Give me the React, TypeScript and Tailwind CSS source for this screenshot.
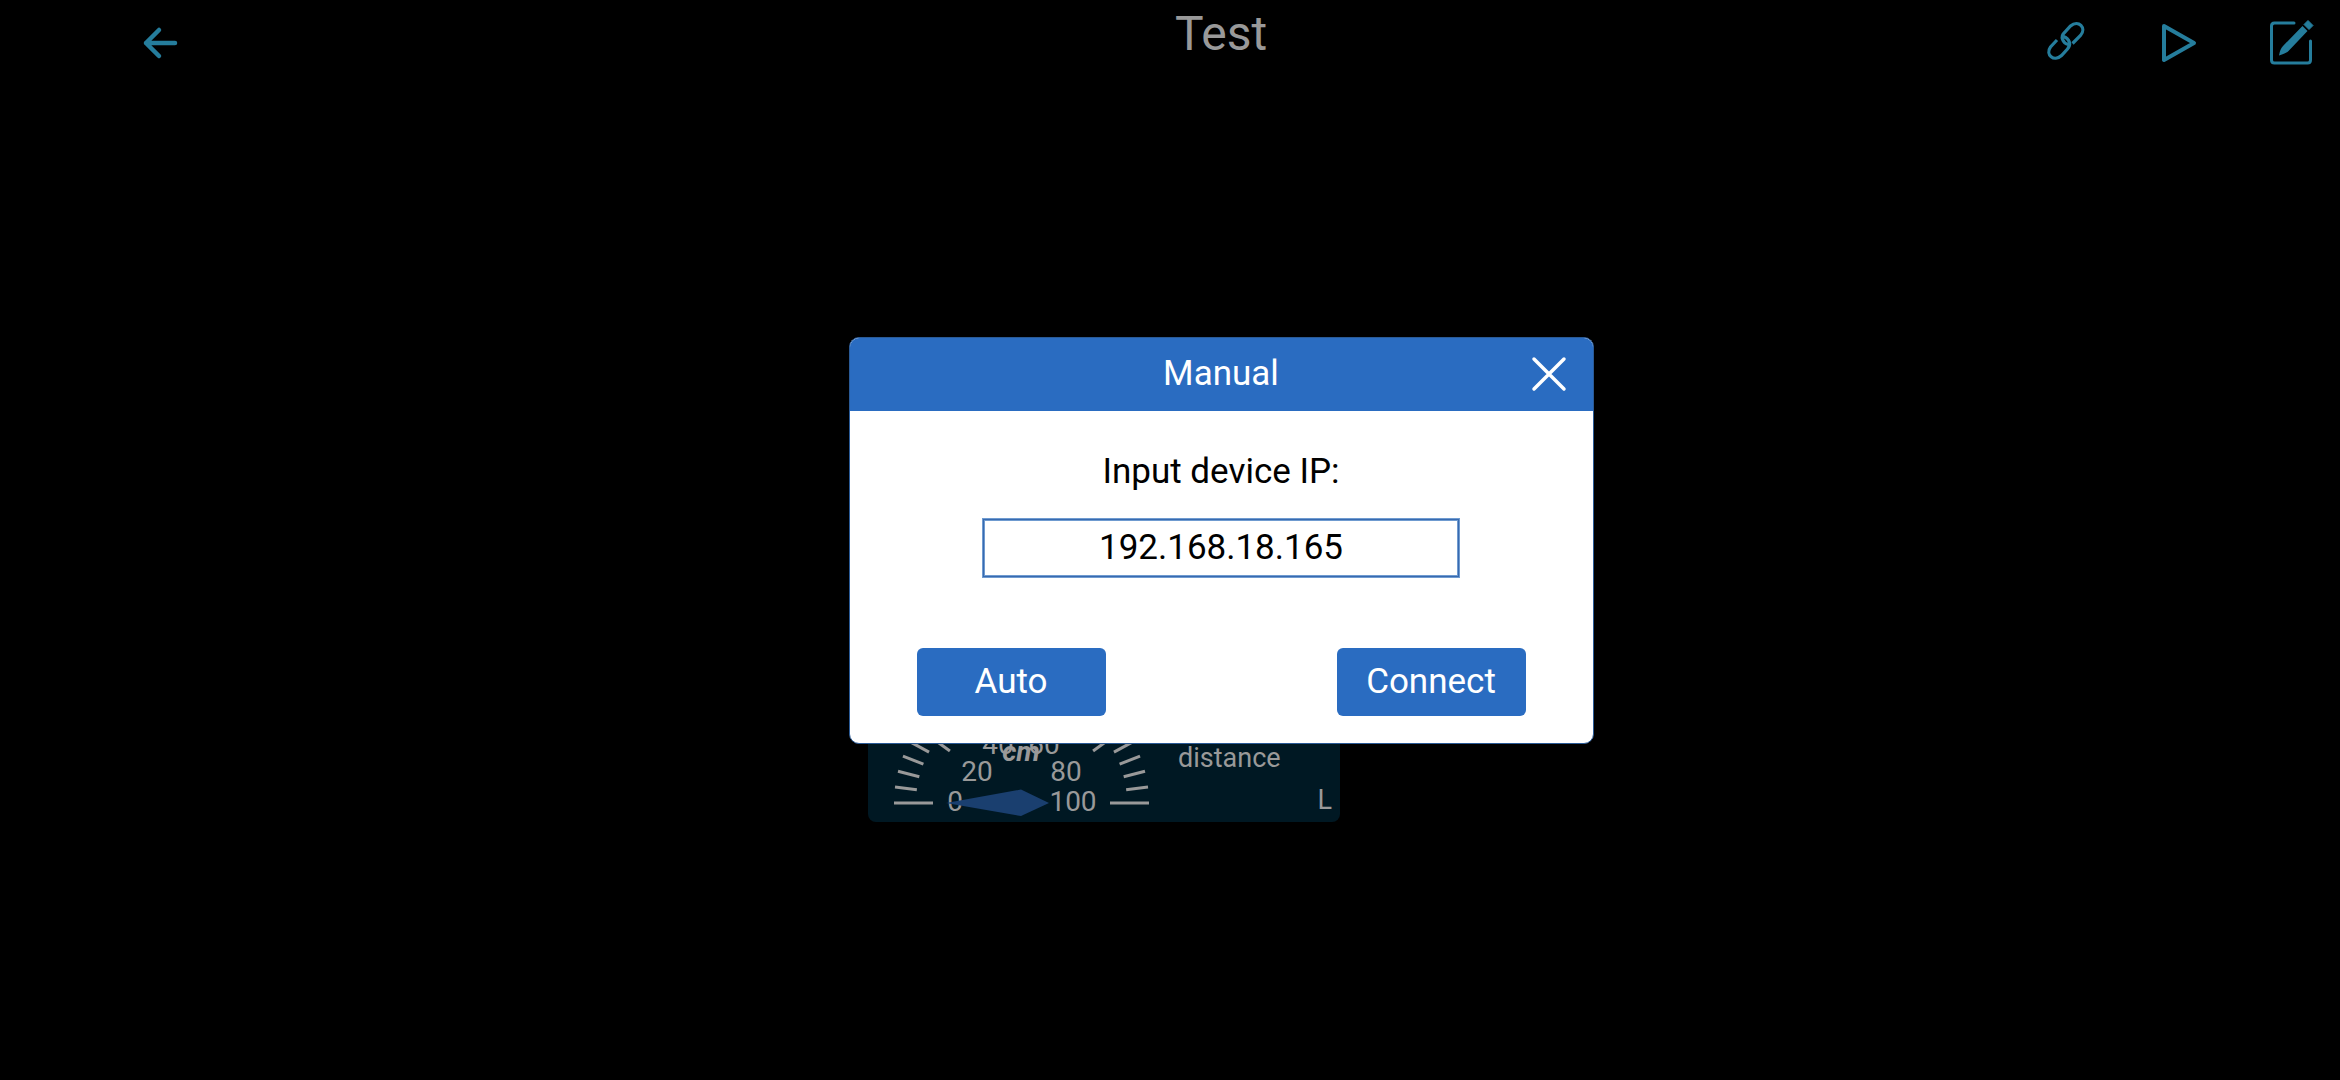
import { useState } from "react";

const TICKS = Array.from({ length: 26 }, (_, i) => i);
const LABELS = [
  { text: "0", x: 87, y: 244 },
  { text: "20", x: 109, y: 214 },
  { text: "40", x: 130, y: 187 },
  { text: "60", x: 176, y: 187 },
  { text: "80", x: 198, y: 214 },
  { text: "100", x: 205, y: 244 },
];

function Gauge() {
  return (
    <svg className="h-[262px] w-[308px] shrink-0" viewBox="0 0 308 262" role="img" aria-label="Distance gauge in centimetres">
      <g stroke="#999999" strokeWidth="3">
        {TICKS.map((i) => {
          const angle = Math.PI - (i * Math.PI) / 25;
          const inner = i % 5 === 0 ? 88.5 : 105.5;
          return (
            <line
              key={i}
              x1={153.5 + 127.5 * Math.cos(angle)}
              y1={243 - 127.5 * Math.sin(angle)}
              x2={153.5 + inner * Math.cos(angle)}
              y2={243 - inner * Math.sin(angle)}
            />
          );
        })}
      </g>
      <g fill="#999999" fontSize="28" textAnchor="middle">
        {LABELS.map((l) => (
          <text key={l.text} x={l.x} y={l.y + 7}>
            {l.text}
          </text>
        ))}
        <text x="153" y="201" fontWeight="700" fontStyle="italic">
          cm
        </text>
      </g>
      <path d="M78 243 L153 229.5 L181 243 L153 256 Z" fill="#1a3f6f" />
    </svg>
  );
}

function GaugeWidget() {
  return (
    <section className="flex w-[472px] overflow-hidden rounded-lg bg-[#001823] text-[27px] leading-8 text-[#999999]">
      <Gauge />
      <div className="flex flex-1 flex-col justify-end pr-2 pb-1.5">
        <p className="pl-0.5">distance</p>
        <p className="pt-2.5 text-right">L</p>
      </div>
    </section>
  );
}

function TopBar() {
  return (
    <header className="grid grid-cols-3 items-start text-[#257d9c]">
      <div className="pt-6 pl-10">
        <button aria-label="Back" className="block">
          <svg className="h-[38px] w-[36px]" viewBox="0 0 36 38" fill="none" stroke="currentColor" strokeWidth="4.5" strokeLinecap="round" strokeLinejoin="round">
            <path d="M33 19H4M17 6L4 19l13 13" />
          </svg>
        </button>
      </div>
      <h1 className="pt-1 text-center text-[48px] leading-[60px] text-[#999999]">Test</h1>
      <div className="flex justify-end gap-[65px] pt-[18px] pr-[25px]">
        <button aria-label="Link">
          <svg className="size-12" viewBox="0 0 48 48" fill="none" stroke="currentColor" strokeWidth="3.2">
            <path d="M28.5 27.5C22.500 26 20 19.500 24.5 15.5L30.5 9C38.500 2 47 11 40.500 18.500L32.500 26.500" transform="translate(-1 -1)" />
            <path d="M22.500 18.500C28.500 20.500 30.500 26.500 26.500 31L20.500 37.500C13 44.500 4 36.500 9.500 29L16 22" />
          </svg>
        </button>
        <button aria-label="Run">
          <svg className="size-12" viewBox="0 0 48 48" fill="none" stroke="currentColor" strokeWidth="4" strokeLinejoin="round">
            <path d="M10 8L40 25L10 42Z" />
          </svg>
        </button>
        <button aria-label="Edit">
          <svg className="size-12" viewBox="0 0 48 48">
            <path d="M27 5H7.500Q4.500 5 4.500 8V42Q4.500 45 7.500 45H40.500Q43.500 45 43.500 42V23" fill="none" stroke="currentColor" strokeWidth="3" strokeLinecap="round" />
            <path d="M35.500 8L40.500 13L21.500 33Q19 35.500 12 37.500Q13 31 16 28Z" fill="currentColor" />
            <path d="M37 6.500L41 2.500L46 7.500L42 11.500Z" fill="currentColor" stroke="currentColor" strokeWidth="1" strokeLinejoin="round" />
          </svg>
        </button>
      </div>
    </header>
  );
}

function ManualDialog() {
  const [ip, setIp] = useState("192.168.18.165");
  return (
    <div role="dialog" aria-modal="true" aria-labelledby="dialog-title" className="w-[745px] overflow-hidden rounded-[10px] border border-[#2a5a96] bg-white text-black">
      <div className="grid h-[73px] grid-cols-[1fr_auto_1fr] items-center bg-[#2a6cc1] px-6 text-white">
        <h2 id="dialog-title" className="col-start-2 text-[35px] leading-10">
          Manual
        </h2>
        <button aria-label="Close" className="justify-self-end">
          <svg className="size-10" viewBox="0 0 40 40" fill="none" stroke="currentColor" strokeWidth="3.5" strokeLinecap="round">
            <path d="M5 5L35 35M35 5L5 35" />
          </svg>
        </button>
      </div>
      <div className="flex flex-col items-center pt-[41px]">
        <label htmlFor="device-ip" className="text-[35px] leading-10">
          Input device IP:
        </label>
        <input
          id="device-ip"
          value={ip}
          onChange={(e) => setIp(e.target.value)}
          className="mt-[26px] h-[60px] w-[478px] border-3 border-[#6f9bd0] text-center text-[35px] outline-1 -outline-offset-2 outline-[#386ab0]"
        />
      </div>
      <div className="flex justify-between px-[67px] pt-[70px] pb-[27px] text-[35px] leading-10 text-white">
        <button className="h-[68px] w-[189px] rounded-md bg-[#2a6cc1]">Auto</button>
        <button className="h-[68px] w-[189px] rounded-md bg-[#2a6cc1]">Connect</button>
      </div>
    </div>
  );
}

export default function App() {
  return (
    <div className="relative flex min-h-screen flex-col bg-black pl-[102px] font-[Roboto,sans-serif]">
      <TopBar />
      <main className="flex justify-center pt-[494px] pr-[234px]">
        <GaugeWidget />
      </main>
      <div className="absolute inset-0 flex items-center justify-center pl-[102px]">
        <ManualDialog />
      </div>
    </div>
  );
}
